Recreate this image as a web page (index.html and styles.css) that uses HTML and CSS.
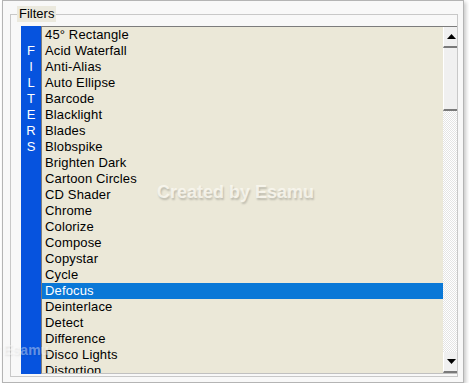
FILE: index.html
```html
<!DOCTYPE html>
<html lang="en">
<head>
    <meta charset="UTF-8">
    <title>Filters</title>
    <link rel="stylesheet" href="styles.css">
</head>
<body>
    <div class="frame">
        <fieldset class="group">
            <legend>Filters</legend>
            <div class="filter-box">
                <div class="side-tab">
                    <span>F</span><span>I</span><span>L</span><span>T</span><span>E</span><span>R</span><span>S</span>
                </div>
                <div class="listbox">
                    <ul class="items">
                        <li>45° Rectangle</li>
                        <li>Acid Waterfall</li>
                        <li>Anti-Alias</li>
                        <li>Auto Ellipse</li>
                        <li>Barcode</li>
                        <li>Blacklight</li>
                        <li>Blades</li>
                        <li>Blobspike</li>
                        <li>Brighten Dark</li>
                        <li>Cartoon Circles</li>
                        <li>CD Shader</li>
                        <li>Chrome</li>
                        <li>Colorize</li>
                        <li>Compose</li>
                        <li>Copystar</li>
                        <li>Cycle</li>
                        <li class="selected">Defocus</li>
                        <li>Deinterlace</li>
                        <li>Detect</li>
                        <li>Difference</li>
                        <li>Disco Lights</li>
                        <li>Distortion</li>
                    </ul>
                    <div class="scrollbar">
                        <div class="sb-btn">
                            <svg width="9" height="5" viewBox="0 0 9 5"><polygon points="4.5,0 9,5 0,5" fill="#000"/></svg>
                        </div>
                        <div class="sb-track">
                            <div class="sb-thumb"></div>
                        </div>
                        <div class="sb-btn">
                            <svg width="9" height="5" viewBox="0 0 9 5"><polygon points="0,0 9,0 4.5,5" fill="#000"/></svg>
                        </div>
                    </div>
                </div>
            </div>
        </fieldset>
        <div class="watermark">Created by Esamu</div>
        <div class="watermark faint">Created by Esamu</div>
    </div>
</body>
</html>
```

FILE: styles.css
```css
body {
    margin: 0;
    background-color: #ffffff;
    font-family: 'Liberation Sans', Arial, sans-serif;
    font-size: 13px;
    color: #000000;
    overflow: hidden;
}
.frame {
    position: relative;
    box-sizing: border-box;
    width: 462px;
    height: 383px;
    margin-left: 2px;
    padding: 5px 5px 5px 7px;
    border: 1px solid #b4b4b4;
    background-color: #f8f8f8;
    box-shadow: 2px 2px 4px rgba(0, 0, 0, 0.22);
}
.group {
    box-sizing: border-box;
    width: 448px;
    margin: 0;
    padding: 4px 0 2px 10px;
    border: 1px solid #c8c8c8;
}
.group legend {
    margin-left: -4px;
    padding: 0 2px;
    line-height: 16px;
    background-color: #ebe9de;
}
.filter-box {
    display: flex;
}
.side-tab {
    display: flex;
    flex-direction: column;
    width: 20px;
    padding-top: 17px;
    background-color: #0653de;
    color: #ffffff;
    text-align: center;
}
.side-tab span {
    line-height: 16px;
}
.listbox {
    display: flex;
    flex: 1;
    height: 348px;
    box-sizing: border-box;
    border-top: 1px solid #7c7c7c;
    border-left: 1px solid #7c7c7c;
    border-bottom: 1px solid #c0c0c0;
    background-color: #ebe8d8;
}
.items {
    flex: 1;
    margin: 0;
    padding: 0;
    list-style: none;
    overflow: hidden;
}
.items li {
    height: 16px;
    line-height: 16px;
    padding-left: 3px;
    letter-spacing: 0.15px;
    white-space: nowrap;
}
.items li.selected {
    background-color: #0a78d7;
    color: #ffffff;
}
.scrollbar {
    display: flex;
    flex-direction: column;
    width: 14px;
}
.sb-btn {
    display: flex;
    align-items: center;
    justify-content: center;
    box-sizing: border-box;
    height: 21px;
    padding-left: 2px;
    border-left: 1px solid #ffffff;
    border-bottom: 2px solid #7a7a7a;
    background-color: #f0f0f0;
}
.sb-track {
    flex: 1;
    background-color: #ffffff;
    background-image: repeating-conic-gradient(#e4e4e4 0 25%, #ffffff 0 50%);
    background-size: 2px 2px;
}
.sb-thumb {
    box-sizing: border-box;
    height: 63px;
    border-left: 1px solid #ffffff;
    border-bottom: 2px solid #7a7a7a;
    background-color: #f0f0f0;
}
.watermark {
    position: absolute;
    left: 154px;
    top: 181px;
    font-size: 18px;
    font-weight: bold;
    line-height: 20px;
    white-space: nowrap;
    color: rgba(250, 248, 240, 0.85);
    text-shadow: 1px 2px 2px rgba(0, 0, 0, 0.2);
}
.watermark.faint {
    left: -76px;
    top: 341px;
    font-size: 14px;
    line-height: 16px;
    color: rgba(255, 255, 255, 0.4);
    text-shadow: 1px 1px 2px rgba(0, 0, 0, 0.08);
}
```
